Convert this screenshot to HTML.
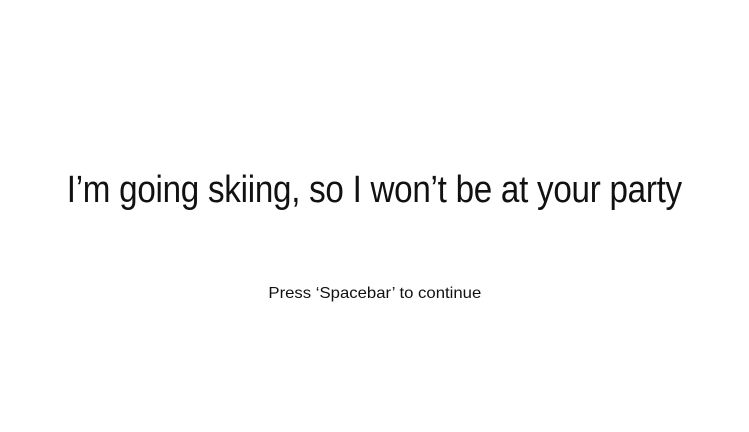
<!DOCTYPE html>
<html><head><style>
html,body{margin:0;padding:0;background:#fff;width:749px;height:432px;overflow:hidden}
.t{position:absolute;left:0;width:749px;text-align:center;font-family:"Liberation Sans",sans-serif;color:#111;white-space:nowrap}
.t span{display:inline-block}
#a{top:168px;font-size:38px;line-height:44px}
#a span{transform:scaleX(0.873);letter-spacing:-0.3px}
#b{top:284px;font-size:16px;line-height:20px}
#b span{transform:scaleX(1.045)}
</style></head><body>
<div class="t" id="a"><span>I’m going skiing, so I won’t be at your party</span></div>
<div class="t" id="b"><span>Press ‘Spacebar’ to continue</span></div>
</body></html>
